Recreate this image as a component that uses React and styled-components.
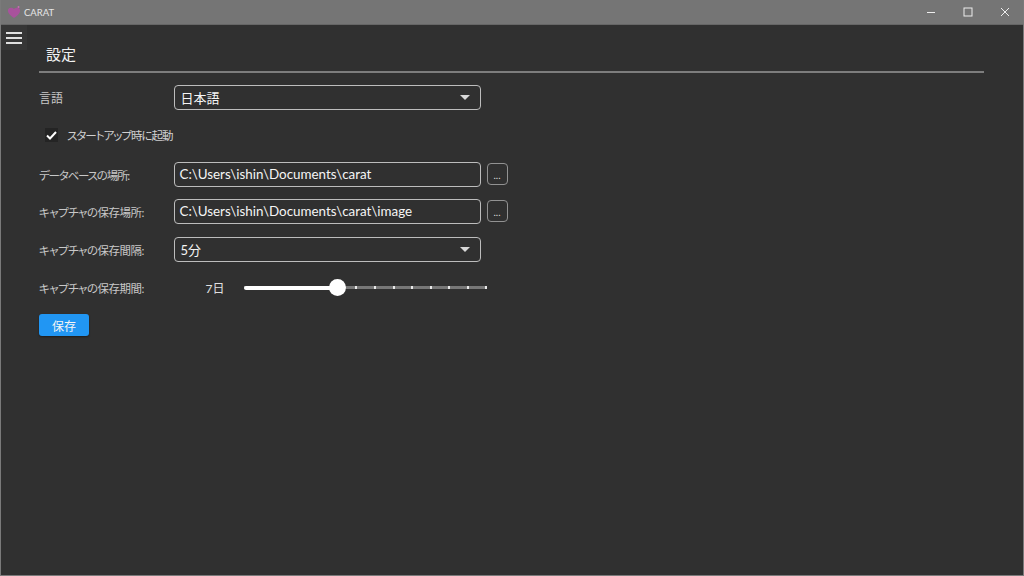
import React from "react";
import styled, { createGlobalStyle } from "styled-components";

const FONT = `"Lato", "Noto Sans CJK JP", sans-serif`;

const Global = createGlobalStyle`
  html, body { margin: 0; padding: 0; background: #303030; }
  * { box-sizing: border-box; }
`;

const Win = styled.div`
  width: 1024px; height: 576px; display: flex; flex-direction: column;
  background: #303030; border: 1px solid #7a7a7a; border-top: 0; overflow: hidden;
  font-family: ${FONT}; color: #fff; font-feature-settings: "palt";
`;
const TitleBar = styled.div`
  height: 25px; flex: none; background: #757575; display: flex; align-items: center;
  margin: 0 -1px; padding: 0 1px 0 7px; border-bottom: 1px solid #666;
`;
const TitleText = styled.span`
  font-size: 9.5px; color: #e6e6e6; margin-left: 3px; flex: 1;
`;
const WinBtn = styled.div`
  width: 37px; height: 24px; display: flex; align-items: center; justify-content: center;
`;
const Body = styled.div`flex: 1; display: flex; min-height: 0;`;
const Rail = styled.div`width: 38px; flex: none;`;
const Menu = styled.div`
  width: 26px; height: 25px; background: #363636; display: flex; flex-direction: column;
  justify-content: center; gap: 3px; padding: 0 5px;
`;
const MenuLine = styled.i`display: block; height: 2px; background: #e0e0e0;`;
const Main = styled.div`width: 945px; flex: none;`;
const Heading = styled.div`
  height: 48px; border-bottom: 2px solid #7d7d7d; font-size: 15px; line-height: 22px;
  padding: 18px 0 0 7px; color: #f2f2f2;
`;
const Row = styled.div`
  display: flex; align-items: center; height: 25px; margin-top: ${p => p.$mt || 0}px;
`;
const Label = styled.div`
  width: 134.5px; flex: none; font-size: ${p => (p.$track ? 11.5 : 12)}px; color: #c8c8c8; white-space: nowrap;
  letter-spacing: ${p => p.$track || 0}px;
`;
const Field = styled.div`
  width: 307px; height: 25px; flex: none; border: 1px solid #bdbdbd; border-radius: 4px;
  display: flex; align-items: center; justify-content: space-between;
  padding: 0 10px 0 6px; font-size: 13px; color: #f5f5f5; white-space: nowrap;
`;
const PathField = styled(Field)`
  font-size: 13.4px; padding: 0 10px 1px 5px;
`;
const Caret = styled.i`
  width: 0; height: 0; border-left: 5px solid transparent; border-right: 5px solid transparent;
  border-top: 5px solid #d8d8d8;
`;
const Dots = styled.div`
  width: 21px; height: 22px; margin: -1px 0 0 6px; border: 1px solid #929292; border-radius: 4px;
  font-size: 10px; color: #ddd; display: flex; align-items: flex-end; justify-content: center; line-height: 15px;
  padding-bottom: 1px;
`;
const CheckRow = styled.div`
  display: flex; align-items: center; height: 26px; margin-top: 12px; padding-left: 6px;
  font-size: 11.5px; color: #d0d0d0; letter-spacing: -1px;
`;
const Check = styled.div`
  width: 13px; height: 14px; background: #242424; margin-right: 9px; display: flex; align-items: center; justify-content: center;
`;
const Days = styled.div`width: 70px; flex: none; text-align: center; font-size: 12px; color: #e0e0e0; padding-left: 13px; white-space: nowrap;`;
const Track = styled.div`
  position: relative; width: 243px; height: 3px; background: #777; display: flex; align-items: center;
`;
const Fill = styled.div`width: 93px; height: 4px; background: #fff; border-radius: 2px; flex: none;`;
const Thumb = styled.div`
  position: absolute; left: 85px; top: -7px; width: 17px; height: 17px; border-radius: 50%; background: #fff;
`;
const Tick = styled.i`position: absolute; top: 0; width: 2px; height: 3px; background: #e8e8e8;`;
const Save = styled.button`
  display: block; width: 50px; height: 22px; margin-top: 14px; padding: 0; border: 0; border-radius: 3px;
  background: #2196f3; color: #f5f5f5; font: 12px ${FONT}; box-shadow: 0 1px 2px rgba(0,0,0,.4);
`;

export default function App() {
  const ticks = [111, 130, 149, 167, 186, 204, 223, 241];
  return (
    <Win>
      <Global />
      <TitleBar>
        <svg width="14" height="14" viewBox="0 0 14 14">
          <path d="M7 13C3 10.4 .5 7.8 1 4.8 1.5 2.4 5 2 7 4 9 2 12.5 2.4 13 4.8 13.5 7.8 11 10.4 7 13Z" fill="#a8529c" />
          <circle cx="11.5" cy="2" r="1" fill="#c86ab5" />
        </svg>
        <TitleText>CARAT</TitleText>
        <WinBtn>
          <svg width="10" height="10" viewBox="0 0 10 10"><path d="M1 5.5H9" stroke="#eee" fill="none" /></svg>
        </WinBtn>
        <WinBtn>
          <svg width="10" height="10" viewBox="0 0 10 10"><rect x="1" y="1" width="8" height="8" stroke="#eee" fill="none" /></svg>
        </WinBtn>
        <WinBtn>
          <svg width="10" height="10" viewBox="0 0 10 10"><path d="M1 1L9 9M9 1L1 9" stroke="#eee" fill="none" /></svg>
        </WinBtn>
      </TitleBar>
      <Body>
        <Rail>
          <Menu><MenuLine /><MenuLine /><MenuLine /></Menu>
        </Rail>
        <Main>
          <Heading>設定</Heading>
          <Row $mt={12}>
            <Label>言語</Label>
            <Field>日本語<Caret /></Field>
          </Row>
          <CheckRow>
            <Check>
              <svg width="11" height="11" viewBox="0 0 11 11"><path d="M1 5.5L4 8.5 10 2" stroke="#fff" strokeWidth="2" fill="none" /></svg>
            </Check>
            スタートアップ時に起動
          </CheckRow>
          <Row $mt={14}>
            <Label $track={-1.2}>データベースの場所:</Label>
            <PathField>C:\Users\ishin\Documents\carat</PathField>
            <Dots>...</Dots>
          </Row>
          <Row $mt={12}>
            <Label $track={-0.5}>キャプチャの保存場所:</Label>
            <PathField>C:\Users\ishin\Documents\carat\image</PathField>
            <Dots>...</Dots>
          </Row>
          <Row $mt={13}>
            <Label $track={-0.5}>キャプチャの保存間隔:</Label>
            <Field>5分<Caret /></Field>
          </Row>
          <Row $mt={13}>
            <Label $track={-0.5}>キャプチャの保存期間:</Label>
            <Days>7日</Days>
            <Track>
              <Fill />
              {ticks.map(t => <Tick key={t} style={{ left: t }} />)}
              <Thumb />
            </Track>
          </Row>
          <Save>保存</Save>
        </Main>
      </Body>
    </Win>
  );
}
